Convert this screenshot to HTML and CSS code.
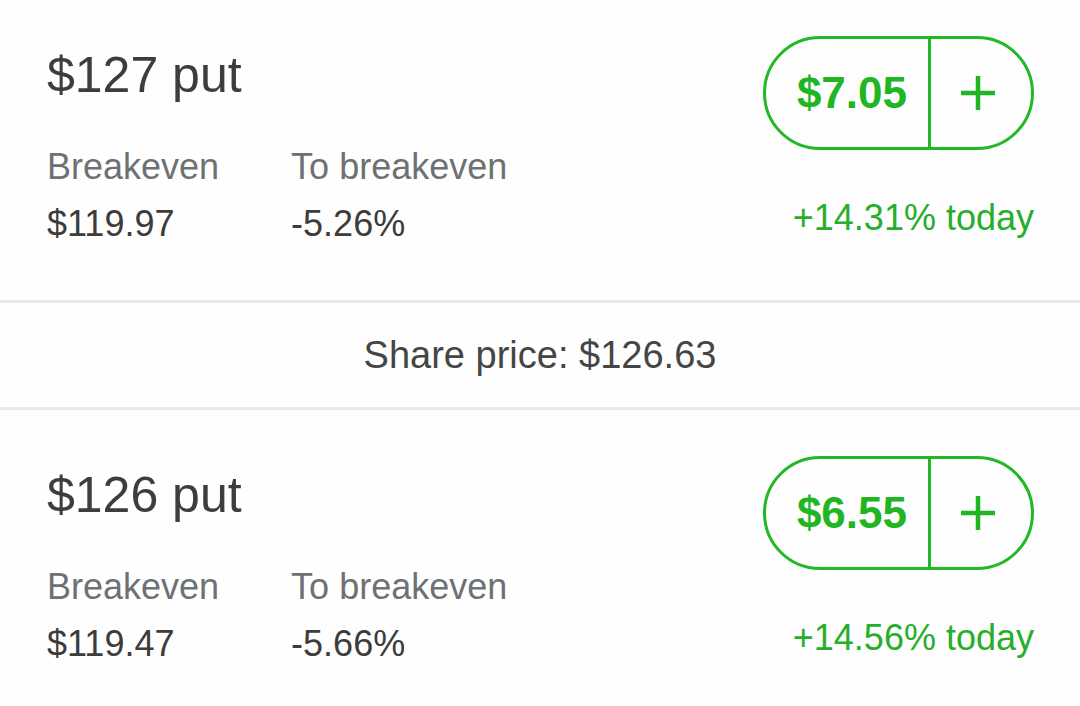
FILE: index.html
```html
<!DOCTYPE html>
<html lang="en">
<head>
    <meta charset="UTF-8">
    <meta name="viewport" content="width=device-width, initial-scale=1.0">
    <title>Options - Puts</title>
    <link rel="stylesheet" href="styles.css">
</head>
<body>
    <div class="chain">
        <div class="option-row">
            <div class="option-info">
                <h2 class="strike">$127 put</h2>
                <div class="stats">
                    <div class="stat">
                        <span class="stat-label">Breakeven</span>
                        <span class="stat-value">$119.97</span>
                    </div>
                    <div class="stat">
                        <span class="stat-label">To breakeven</span>
                        <span class="stat-value">-5.26%</span>
                    </div>
                </div>
            </div>
            <div class="option-trade">
                <div class="price-pill">
                    <span class="price">$7.05</span>
                    <span class="add">
                        <svg width="36" height="36" viewBox="0 0 36 36"><path d="M18 1v34M1 18h34" stroke="currentColor" stroke-width="4.5" fill="none"/></svg>
                    </span>
                </div>
                <span class="change">+14.31% today</span>
            </div>
        </div>

        <div class="share-price">Share price: $126.63</div>

        <div class="option-row">
            <div class="option-info">
                <h2 class="strike">$126 put</h2>
                <div class="stats">
                    <div class="stat">
                        <span class="stat-label">Breakeven</span>
                        <span class="stat-value">$119.47</span>
                    </div>
                    <div class="stat">
                        <span class="stat-label">To breakeven</span>
                        <span class="stat-value">-5.66%</span>
                    </div>
                </div>
            </div>
            <div class="option-trade">
                <div class="price-pill">
                    <span class="price">$6.55</span>
                    <span class="add">
                        <svg width="36" height="36" viewBox="0 0 36 36"><path d="M18 1v34M1 18h34" stroke="currentColor" stroke-width="4.5" fill="none"/></svg>
                    </span>
                </div>
                <span class="change">+14.56% today</span>
            </div>
        </div>
    </div>
</body>
</html>
```

FILE: styles.css
```css
body {
    font-family: 'Liberation Sans', Arial, sans-serif;
    margin: 0;
    padding: 0;
    background-color: #fefefe;
    color: #3c3c3c;
    overflow: hidden;
}
.chain {
    margin-top: -10px;
}
.option-row {
    display: flex;
    justify-content: space-between;
    align-items: flex-start;
    padding: 46px 46px 54px 47px;
}
.strike {
    margin: 11px 0 0;
    font-size: 50px;
    font-weight: normal;
    line-height: 56px;
    color: #3d3d3d;
}
.stats {
    display: flex;
    gap: 72px;
    margin-top: 42px;
}
.stat {
    display: flex;
    flex-direction: column;
    gap: 13px;
}
.stat-label {
    font-size: 36px;
    line-height: 44px;
    color: #6d7174;
}
.stat-value {
    font-size: 36px;
    line-height: 44px;
    color: #3c3c3c;
}
.option-trade {
    display: flex;
    flex-direction: column;
    align-items: flex-end;
}
.price-pill {
    display: flex;
    height: 114px;
    width: 271px;
    box-sizing: border-box;
    border: 3px solid #22b826;
    border-radius: 57px;
    color: #1fb523;
}
.price {
    width: 165px;
    border-right: 3px solid #22b826;
    display: flex;
    align-items: center;
    justify-content: flex-end;
    padding-right: 21px;
    box-sizing: border-box;
    font-size: 44px;
    font-weight: bold;
}
.add {
    flex: 1;
    display: flex;
    align-items: center;
    justify-content: center;
    padding-right: 6px;
}
.change {
    margin-top: 46px;
    font-size: 36px;
    line-height: 44px;
    color: #27ae2b;
}
.share-price {
    border-top: 3px solid #e7e9ea;
    border-bottom: 3px solid #e7e9ea;
    text-align: center;
    font-size: 38px;
    line-height: 104px;
    color: #454545;
}
```
